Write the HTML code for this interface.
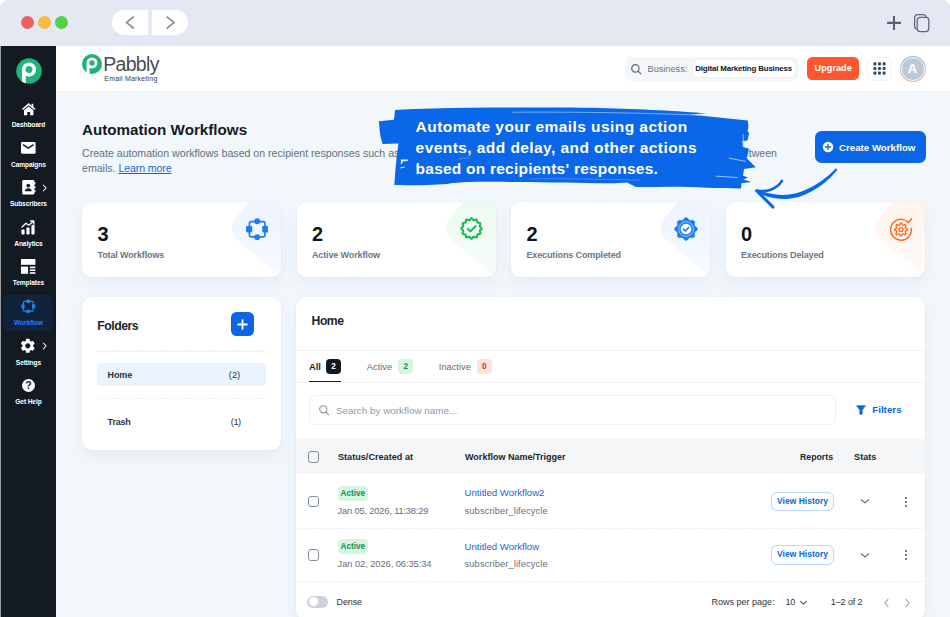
<!DOCTYPE html>
<html lang="en">
<head>
<meta charset="utf-8">
<title>Automation Workflows - Pabbly Email Marketing</title>
<style>
*{box-sizing:border-box;margin:0;padding:0}
html,body{width:950px;height:617px;overflow:hidden;background:#fff}
body{font-family:"Liberation Sans",sans-serif;color:#1c252e;position:relative;-webkit-font-smoothing:antialiased}
.abs{position:absolute}
#win{position:absolute;left:0;top:0;width:950px;height:617px;background:#e5e8f2;border-radius:7.5px 7.5px 0 0;overflow:hidden}
/* chrome */
.dot{position:absolute;top:16.1px;width:13px;height:13px;border-radius:50%}
.navpill{position:absolute;top:10px;height:25px;background:#fff}
/* sidebar */
#side{position:absolute;left:.8px;top:46px;width:55.6px;height:571px;background:#141a22}
#edge{position:absolute;left:0;top:46px;width:.9px;height:571px;background:#9b9ea2}
.sl{position:absolute;left:.7px;width:55.5px;text-align:center;color:#fff;font-weight:700;font-size:6.6px;line-height:8px;letter-spacing:-0.1px;white-space:nowrap}
.si{position:absolute}
/* header */
#hdr{position:absolute;left:56.4px;top:46px;width:893.6px;height:45.5px;background:#fff}
#hdrline{position:absolute;left:56.6px;top:91.2px;width:893.4px;height:1.3px;background:repeating-linear-gradient(90deg,#e4e9ee 0 2px,rgba(255,255,255,0) 2px 3px)}
#main{position:absolute;left:56.4px;top:91.5px;width:893.6px;height:526px;background:#f1f7fb}
.t{position:absolute;white-space:nowrap;line-height:1}
.card{position:absolute;top:201.5px;width:199.3px;height:75.5px;background:#fff;border-radius:9px;box-shadow:0 0 1.5px rgba(145,158,171,.22),0 7.5px 15px -2.5px rgba(145,158,171,.13);overflow:hidden}
.card .num{position:absolute;left:15.5px;top:22px;font-weight:700;font-size:20px;line-height:20px;color:#10151c}
.card .lab{position:absolute;left:15.5px;top:47.5px;font-weight:700;font-size:9px;letter-spacing:-.13px;line-height:12px;color:#6b7785;white-space:nowrap}
.card .dia{position:absolute;right:-64.6px;top:-28px;width:100px;height:100px;border-radius:15px;transform:rotate(40deg)}
.panel{position:absolute;background:#fff;border-radius:10px;box-shadow:0 0 1.5px rgba(145,158,171,.22),0 7.5px 15px -2.5px rgba(145,158,171,.13)}
.dash{position:absolute;height:1.2px;margin-top:-.2px;background:repeating-linear-gradient(90deg,#edf0f3 0 2px,rgba(255,255,255,0) 2px 3px)}

.cb{position:absolute;left:308.1px;width:11.3px;height:11.3px;border:1.4px solid #818d9b;border-radius:2.8px;margin-top:.3px}
.badge{height:15.4px;width:30.6px;border-radius:4px;background:#d8f5e2;color:#118d57;font-weight:700;font-size:8.2px;line-height:15.2px;text-align:center;white-space:nowrap}
.date{font-size:9.3px;line-height:11px;color:#626f7d}
.wname{font-size:9.6px;line-height:11px;color:#1565d8}
.vh{left:771.4px;width:62.3px;height:19.5px;border:1.2px solid #bcd5fa;border-radius:6px;background:#fff;color:#0d66e4;font-weight:700;font-size:8.5px;line-height:17.3px;text-align:center;white-space:nowrap}
</style>
</head>
<body>
<div id="win">
  <!-- browser chrome -->
  <div class="dot" style="left:21px;background:#f25f5c"></div>
  <div class="dot" style="left:38px;background:#f9bb3f"></div>
  <div class="dot" style="left:55px;background:#56cf46"></div>
  <div class="navpill" style="left:112px;width:36.1px;border-radius:12.5px 0 0 12.5px"></div>
  <div class="navpill" style="left:151.9px;width:36.1px;border-radius:0 12.5px 12.5px 0"></div>
  <svg class="abs" style="left:112px;top:10px" width="76" height="25" viewBox="0 0 76 25" fill="none" stroke="#8d8d92" stroke-width="1.7" stroke-linecap="butt" stroke-linejoin="miter">
    <path d="M21.9 6.7 L14.6 12.6 L21.9 18.5"/><path d="M54.7 6.7 L62 12.6 L54.7 18.5"/>
  </svg>
  <svg class="abs" style="left:884px;top:12px" width="50" height="24" viewBox="0 0 50 24" fill="none" stroke="#5f6b7c" stroke-width="1.3" stroke-linecap="round">
    <path d="M3.1 10.9 H17 M10 4 V17.9" stroke-width="2.1" stroke-linecap="butt" stroke="#566274"/>
    <rect x="30.6" y="2.6" width="11.4" height="14.6" rx="3.2"/>
    <rect x="33.2" y="5.4" width="11.6" height="14.2" rx="3" fill="#e5e8f2"/>
  </svg>

  <!-- sidebar -->
  <div id="side"></div>
  <div id="edge"></div>

  <!-- sidebar content -->
  <svg class="abs" style="left:15.7px;top:58px" width="26" height="26" viewBox="0 0 26 26">
    <defs><clipPath id="lc1"><circle cx="13" cy="13" r="12.75"/></clipPath></defs>
    <circle cx="13" cy="13" r="12.75" fill="#20b276"/>
    <g clip-path="url(#lc1)" fill="#fff"><circle cx="13" cy="11.6" r="7.1"/><rect x="5.9" y="11.6" width="3.9" height="15"/></g>
    <circle cx="13" cy="11.6" r="3.5" fill="#20b276"/>
  </svg>
  <!-- dashboard -->
  <svg class="abs" style="left:20.6px;top:101.6px" width="15.4" height="14.5" viewBox="0 0 17 16" fill="#fff">
    <path d="M8.5 1.2 L1 7.6 L2.1 8.9 L8.5 3.5 L14.9 8.9 L16 7.6 L13.6 5.5 V1.8 H11.8 V4 Z"/>
    <path d="M3.3 9.2 L8.5 4.9 L13.7 9.2 V14.6 H10.1 V10.9 H6.9 V14.6 H3.3 Z"/>
  </svg>
  <div class="sl" style="top:121px">Dashboard</div>
  <!-- campaigns -->
  <svg class="abs" style="left:21.3px;top:142.2px" width="14.6" height="11.8" viewBox="0 0 14.6 11.8">
    <rect x="0" y="0" width="14.6" height="11.8" rx="1.4" fill="#fff"/>
    <path d="M2 2.6 L7.3 6.1 L12.6 2.6" fill="none" stroke="#141a22" stroke-width="1.5"/>
  </svg>
  <div class="sl" style="top:161px">Campaigns</div>
  <!-- subscribers -->
  <svg class="abs" style="left:21.8px;top:180.4px" width="14" height="14.6" viewBox="0 0 14 14.6">
    <path d="M1.6 0 H11 A1.4 1.4 0 0 1 12.4 1.4 V2.2 H13.4 V4.2 H12.4 V6.2 H13.4 V8.2 H12.4 V10.2 H13.4 V12.2 H12.4 V13.2 A1.4 1.4 0 0 1 11 14.6 H1.6 A1.4 1.4 0 0 1 .2 13.2 V1.4 A1.4 1.4 0 0 1 1.6 0 Z" fill="#fff"/>
    <circle cx="6.3" cy="5.6" r="1.9" fill="#141a22"/>
    <path d="M2.9 11.2 C2.9 9.2 4.5 8.3 6.3 8.3 C8.1 8.3 9.7 9.2 9.7 11.2 Z" fill="#141a22"/>
  </svg>
  <svg class="abs" style="left:41.6px;top:184.2px" width="5.4" height="8.1" viewBox="0 0 6 9" fill="none" stroke="#dfe3e8" stroke-width="1.2" stroke-linecap="round" stroke-linejoin="round"><path d="M1.5 1.2 L4.6 4.4 L1.5 7.6"/></svg>
  <div class="sl" style="top:200px">Subscribers</div>
  <!-- analytics -->
  <svg class="abs" style="left:21.2px;top:219.5px" width="14.6" height="15" viewBox="0 0 14.6 15">
    <rect x=".4" y="9.6" width="3.2" height="4.8" rx=".9" fill="#fff"/>
    <rect x="5.4" y="7.4" width="3.2" height="7" rx=".9" fill="#fff"/>
    <rect x="10.4" y="5" width="3.2" height="9.4" rx=".9" fill="#fff"/>
    <path d="M1 7 L5 3.2 L7.6 5.2 L12.4 1.4 M9.6 1 H12.8 V4.2" fill="none" stroke="#fff" stroke-width="1.3" stroke-linecap="round" stroke-linejoin="round"/>
  </svg>
  <div class="sl" style="top:240px">Analytics</div>
  <!-- templates -->
  <svg class="abs" style="left:21.2px;top:259.2px" width="14.4" height="15" viewBox="0 0 14.4 15" fill="#fff">
    <rect x="0" y="0" width="14.4" height="5.8"/>
    <rect x="0" y="7.6" width="7" height="7.2"/>
    <rect x="8.8" y="7.6" width="5.6" height="1.6"/>
    <rect x="8.8" y="10.4" width="5.6" height="1.6"/>
    <rect x="8.8" y="13.2" width="5.6" height="1.6"/>
  </svg>
  <div class="sl" style="top:279px">Templates</div>
  <!-- workflow (active) -->
  <div class="abs" style="left:3.4px;top:294.8px;width:50px;height:36px;border-radius:6px;background:#11233a"></div>
  <svg class="abs" style="left:21.2px;top:298.9px" width="14.6" height="14.6" viewBox="0 0 15.6 15.6">
    <rect x="2.6" y="2.6" width="10.4" height="10.4" rx="1" fill="none" stroke="#1a83f5" stroke-width="1.3"/>
    <circle cx="7.8" cy="2.4" r="2.1" fill="#1a83f5"/>
    <circle cx="7.8" cy="13.2" r="2.1" fill="#1a83f5"/>
    <rect x="0.3" y="5.6" width="3.6" height="4.4" rx=".9" fill="#1a83f5"/>
    <rect x="11.7" y="5.6" width="3.6" height="4.4" rx=".9" fill="#1a83f5"/>
  </svg>
  <div class="sl" style="top:319.3px;color:#1a83f5">Workflow</div>
  <!-- settings -->
  <svg class="abs" style="left:19.4px;top:337px" width="17.6" height="17.6" viewBox="0 0 24 24" fill="#fff">
    <path d="M19.14 12.94c.04-.3.06-.61.06-.94 0-.32-.02-.64-.07-.94l2.03-1.58a.49.49 0 0 0 .12-.61l-1.92-3.32a.488.488 0 0 0-.59-.22l-2.39.96c-.5-.38-1.03-.7-1.62-.94l-.36-2.54a.484.484 0 0 0-.48-.41h-3.84c-.24 0-.43.17-.47.41l-.36 2.54c-.59.24-1.13.57-1.62.94l-2.39-.96c-.22-.08-.47 0-.59.22L2.74 8.87c-.12.21-.08.47.12.61l2.03 1.58c-.05.3-.09.63-.09.94s.02.64.07.94l-2.03 1.58a.49.49 0 0 0-.12.61l1.92 3.32c.12.22.37.29.59.22l2.39-.96c.5.38 1.03.7 1.62.94l.36 2.54c.05.24.24.41.48.41h3.84c.24 0 .44-.17.47-.41l.36-2.54c.59-.24 1.13-.56 1.62-.94l2.39.96c.22.08.47 0 .59-.22l1.92-3.32c.12-.22.07-.47-.12-.61l-2.01-1.58zM12 15.6c-1.98 0-3.600-1.620-3.600-3.600s1.620-3.600 3.600-3.600 3.600 1.620 3.600 3.600-1.620 3.600-3.600 3.600z"/>
  </svg>
  <svg class="abs" style="left:41.6px;top:341.8px" width="5.4" height="8.1" viewBox="0 0 6 9" fill="none" stroke="#dfe3e8" stroke-width="1.2" stroke-linecap="round" stroke-linejoin="round"><path d="M1.5 1.2 L4.6 4.4 L1.5 7.6"/></svg>
  <div class="sl" style="top:358.5px">Settings</div>
  <!-- help -->
  <div class="abs" style="left:22px;top:378.7px;width:13px;height:13px;border-radius:50%;background:#fff;color:#141a22;font-weight:700;font-size:10.5px;line-height:13.5px;text-align:center">?</div>
  <div class="sl" style="top:398px">Get Help</div>
  <div id="hdr"></div>
  <div id="main"></div>
  <div id="hdrline"></div>

  <!-- header -->
  <svg class="abs" style="left:81.8px;top:53.8px" width="20" height="20" viewBox="0 0 26 26">
    <defs><clipPath id="lc2"><circle cx="13" cy="13" r="13"/></clipPath></defs>
    <circle cx="13" cy="13" r="13" fill="#20b276"/>
    <g clip-path="url(#lc2)" fill="#fff"><circle cx="13" cy="11.6" r="7.1"/><rect x="5.9" y="11.6" width="3.9" height="15"/></g>
    <circle cx="13" cy="11.6" r="3.5" fill="#20b276"/>
  </svg>
  <div class="t" id="brand" style="left:103.2px;top:52.6px;font-size:19.5px;line-height:22px;color:#4c4c4f;letter-spacing:-0.68px">Pabbly</div>
  <div class="t" id="brandsub" style="left:104.3px;top:73.6px;font-size:7px;line-height:9px;color:#3b3b3d;letter-spacing:.2px">Email Marketing</div>

  <div class="abs" style="left:624.5px;top:57px;width:174.5px;height:23.5px;border-radius:7px;background:#f4f6f8"></div>
  <svg class="abs" style="left:629.5px;top:62.5px" width="12" height="12" viewBox="0 0 12 12" fill="none" stroke="#5f6b7a" stroke-width="1.2" stroke-linecap="round"><circle cx="5.4" cy="5.4" r="3.7"/><path d="M8.2 8.2 L10.8 10.8"/></svg>
  <div class="t" id="biz" style="left:647.5px;top:63.5px;font-size:9.2px;line-height:11px;color:#6b7785;font-weight:400">Business:</div>
  <div class="abs" style="left:692.5px;top:59.8px;width:102px;height:17px;border-radius:5px;background:#fff;box-shadow:0 0 1px rgba(145,158,171,.4)"></div>
  <div class="t" id="bizname" style="left:695.3px;top:63.6px;font-size:7.9px;line-height:10px;color:#10151c;font-weight:700;letter-spacing:-.16px">Digital Marketing Business</div>
  <div class="abs" style="left:807.3px;top:57px;width:51.8px;height:22.8px;border-radius:5.5px;background:#ff5630"></div>
  <div class="t" id="upg" style="left:807.3px;width:51.8px;text-align:center;top:63.2px;font-size:9.2px;line-height:11px;color:#fff;font-weight:700">Upgrade</div>
  <div class="abs" style="left:867px;top:56.5px;width:25px;height:24px;border-radius:5.5px;background:#fff;border:1px solid #f1f3f5"></div>
  <svg class="abs" style="left:872.9px;top:62px" width="13" height="13" viewBox="0 0 13 13" fill="#354761"><rect x="0.35" y="0.35" width="3.1" height="3.1" rx="1.1"/><rect x="4.95" y="0.35" width="3.1" height="3.1" rx="1.1"/><rect x="9.55" y="0.35" width="3.1" height="3.1" rx="1.1"/><rect x="0.35" y="4.95" width="3.1" height="3.1" rx="1.1"/><rect x="4.95" y="4.95" width="3.1" height="3.1" rx="1.1"/><rect x="9.55" y="4.95" width="3.1" height="3.1" rx="1.1"/><rect x="0.35" y="9.55" width="3.1" height="3.1" rx="1.1"/><rect x="4.95" y="9.55" width="3.1" height="3.1" rx="1.1"/><rect x="9.55" y="9.55" width="3.1" height="3.1" rx="1.1"/></svg>
  <div class="abs" style="left:899.5px;top:55.5px;width:26px;height:26px;border-radius:50%;background:linear-gradient(180deg,#8db5ee 0%,#b9c6da 50%,#f3b18d 100%)"></div>
  <div class="abs" id="ava" style="left:900.5px;top:56.5px;width:24px;height:24px;border-radius:50%;background:#bfc9d6;border:1.6px solid #fff;color:#fff;font-weight:700;font-size:13px;line-height:21.4px;text-align:center">A</div>

  <!-- page title -->
  <div class="t" id="title" style="left:82px;top:121.5px;font-size:15.2px;line-height:16px;font-weight:700;color:#141a22">Automation Workflows</div>
  <div class="t" id="desc1" style="left:82px;top:147.1px;font-size:10.6px;line-height:12px;color:#626f7d;width:695px;display:flex;justify-content:space-between"><span id="d1a">Create automation workflows based on recipient responses such as opens, clicks and more, with a smart time delay</span><span>between</span></div>
  <div class="t" id="desc2" style="left:82px;top:162.2px;font-size:10.6px;line-height:12px;color:#626f7d"><span id="d2a">emails.</span> <span id="d2b" style="color:#1565d8;text-decoration:underline;font-weight:400;letter-spacing:-.13px">Learn more</span></div>

  <!-- create workflow -->
  <div class="abs" style="left:814.7px;top:131.3px;width:110.9px;height:31.4px;border-radius:6.5px;background:#0a66e7"></div>
  <svg class="abs" style="left:822px;top:140.6px" width="12" height="12" viewBox="0 0 12 12"><circle cx="6" cy="6" r="5.2" fill="#fff"/><path d="M6 3.4 V8.6 M3.4 6 H8.6" stroke="#0d66e4" stroke-width="1.3" stroke-linecap="round"/></svg>
  <div class="t" id="cw" style="left:839.2px;top:141.8px;font-size:9.8px;line-height:11px;color:#fff;font-weight:700;transform-origin:0 50%;transform:scaleX(.99)">Create Workflow</div>

  <!-- stat cards -->
  <div class="card" style="left:82px">
    <div class="dia" style="background:linear-gradient(140deg,#e7f1fe 0%,#eef5fe 45%,#fafcff 100%)"></div>
    <div class="num">3</div><div class="lab" id="l1">Total Workflows</div>
    <svg class="abs" style="left:164px;top:16.2px" width="22.4" height="22.4" viewBox="0 0 22.4 22.4">
      <rect x="3.4" y="3.6" width="15.6" height="15.2" rx="1.6" fill="none" stroke="#1b7ff5" stroke-width="1.7"/>
      <circle cx="11.2" cy="3.2" r="3" fill="#1b7ff5"/>
      <circle cx="11.2" cy="19.2" r="3" fill="#1b7ff5"/>
      <rect x="0" y="8" width="6.2" height="6.4" rx="1.3" fill="#1b7ff5"/>
      <rect x="16.2" y="8" width="6.2" height="6.4" rx="1.3" fill="#1b7ff5"/>
    </svg>
  </div>
  <div class="card" style="left:296.5px">
    <div class="dia" style="background:linear-gradient(140deg,#e6f8ec 0%,#eefaf2 45%,#fafefb 100%)"></div>
    <div class="num">2</div><div class="lab" id="l2">Active Workflow</div>
    <svg class="abs" style="left:163.8px;top:15.9px" width="23" height="23" viewBox="0 0 24 24" fill="none" stroke="#16b650" stroke-linecap="round" stroke-linejoin="round">
      <path d="M12.00 1.40 L12.41 1.50 L12.80 1.78 L13.16 2.19 L13.48 2.63 L13.78 3.03 L14.09 3.31 L14.42 3.42 L14.80 3.38 L15.24 3.21 L15.73 2.99 L16.24 2.80 L16.74 2.70 L17.17 2.76 L17.52 3.00 L17.75 3.39 L17.89 3.90 L17.95 4.45 L18.01 4.97 L18.10 5.40 L18.29 5.71 L18.60 5.90 L19.03 5.99 L19.55 6.05 L20.10 6.11 L20.61 6.25 L21.00 6.48 L21.24 6.83 L21.30 7.26 L21.20 7.76 L21.01 8.27 L20.79 8.76 L20.62 9.20 L20.58 9.58 L20.69 9.91 L20.97 10.22 L21.37 10.52 L21.81 10.84 L22.22 11.20 L22.50 11.59 L22.60 12.00 L22.50 12.41 L22.22 12.80 L21.81 13.16 L21.37 13.48 L20.97 13.78 L20.69 14.09 L20.58 14.42 L20.62 14.80 L20.79 15.24 L21.01 15.73 L21.20 16.24 L21.30 16.74 L21.24 17.17 L21.00 17.52 L20.61 17.75 L20.10 17.89 L19.55 17.95 L19.03 18.01 L18.60 18.10 L18.29 18.29 L18.10 18.60 L18.01 19.03 L17.95 19.55 L17.89 20.10 L17.75 20.61 L17.52 21.00 L17.17 21.24 L16.74 21.30 L16.24 21.20 L15.73 21.01 L15.24 20.79 L14.80 20.62 L14.42 20.58 L14.09 20.69 L13.78 20.97 L13.48 21.37 L13.16 21.81 L12.80 22.22 L12.41 22.50 L12.00 22.60 L11.59 22.50 L11.20 22.22 L10.84 21.81 L10.52 21.37 L10.22 20.97 L9.91 20.69 L9.58 20.58 L9.20 20.62 L8.76 20.79 L8.27 21.01 L7.76 21.20 L7.26 21.30 L6.83 21.24 L6.48 21.00 L6.25 20.61 L6.11 20.10 L6.05 19.55 L5.99 19.03 L5.90 18.60 L5.71 18.29 L5.40 18.10 L4.97 18.01 L4.45 17.95 L3.90 17.89 L3.39 17.75 L3.00 17.52 L2.76 17.17 L2.70 16.74 L2.80 16.24 L2.99 15.73 L3.21 15.24 L3.38 14.80 L3.42 14.42 L3.31 14.09 L3.03 13.78 L2.63 13.48 L2.19 13.16 L1.78 12.80 L1.50 12.41 L1.40 12.00 L1.50 11.59 L1.78 11.20 L2.19 10.84 L2.63 10.52 L3.03 10.22 L3.31 9.91 L3.42 9.58 L3.38 9.20 L3.21 8.76 L2.99 8.27 L2.80 7.76 L2.70 7.26 L2.76 6.83 L3.00 6.48 L3.39 6.25 L3.90 6.11 L4.45 6.05 L4.97 5.99 L5.40 5.90 L5.71 5.71 L5.90 5.40 L5.99 4.97 L6.05 4.45 L6.11 3.90 L6.25 3.39 L6.48 3.00 L6.83 2.76 L7.26 2.70 L7.76 2.80 L8.27 2.99 L8.76 3.21 L9.20 3.38 L9.58 3.42 L9.91 3.31 L10.22 3.03 L10.52 2.63 L10.84 2.19 L11.20 1.78 L11.59 1.50 Z" stroke-width="2.1"/>
      <path d="M8.2 12.5 L10.9 15 L16.2 9.6" stroke-width="2.1"/>
    </svg>
  </div>
  <div class="card" style="left:511px">
    <div class="dia" style="background:linear-gradient(140deg,#e7f1fe 0%,#eef5fe 45%,#fafcff 100%)"></div>
    <div class="num">2</div><div class="lab" id="l3">Executions Completed</div>
    <svg class="abs" style="left:163px;top:15.3px" width="24" height="24" viewBox="0 0 24 24">
      <path d="M12.00 0.70 L12.44 0.73 L12.88 0.84 L13.30 1.02 L13.70 1.29 L14.02 1.85 L14.30 2.42 L14.62 2.72 L14.94 2.96 L15.26 3.16 L15.60 3.32 L15.95 3.44 L16.31 3.53 L16.71 3.59 L17.15 3.60 L17.75 3.39 L18.38 3.22 L18.85 3.31 L19.27 3.49 L19.65 3.72 L19.99 4.01 L20.28 4.35 L20.51 4.73 L20.69 5.15 L20.78 5.62 L20.61 6.25 L20.40 6.85 L20.41 7.29 L20.47 7.69 L20.56 8.05 L20.68 8.40 L20.84 8.74 L21.04 9.06 L21.28 9.38 L21.58 9.70 L22.15 9.98 L22.71 10.30 L22.98 10.70 L23.16 11.12 L23.27 11.56 L23.30 12.00 L23.27 12.44 L23.16 12.88 L22.98 13.30 L22.71 13.70 L22.15 14.02 L21.58 14.30 L21.28 14.62 L21.04 14.94 L20.84 15.26 L20.68 15.60 L20.56 15.95 L20.47 16.31 L20.41 16.71 L20.40 17.15 L20.61 17.75 L20.78 18.38 L20.69 18.85 L20.51 19.27 L20.28 19.65 L19.99 19.99 L19.65 20.28 L19.27 20.51 L18.85 20.69 L18.38 20.78 L17.75 20.61 L17.15 20.40 L16.71 20.41 L16.31 20.47 L15.95 20.56 L15.60 20.68 L15.26 20.84 L14.94 21.04 L14.62 21.28 L14.30 21.58 L14.02 22.15 L13.70 22.71 L13.30 22.98 L12.88 23.16 L12.44 23.27 L12.00 23.30 L11.56 23.27 L11.12 23.16 L10.70 22.98 L10.30 22.71 L9.98 22.15 L9.70 21.58 L9.38 21.28 L9.06 21.04 L8.74 20.84 L8.40 20.68 L8.05 20.56 L7.69 20.47 L7.29 20.41 L6.85 20.40 L6.25 20.61 L5.62 20.78 L5.15 20.69 L4.73 20.51 L4.35 20.28 L4.01 19.99 L3.72 19.65 L3.49 19.27 L3.31 18.85 L3.22 18.38 L3.39 17.75 L3.60 17.15 L3.59 16.71 L3.53 16.31 L3.44 15.95 L3.32 15.60 L3.16 15.26 L2.96 14.94 L2.72 14.62 L2.42 14.30 L1.85 14.02 L1.29 13.70 L1.02 13.30 L0.84 12.88 L0.73 12.44 L0.70 12.00 L0.73 11.56 L0.84 11.12 L1.02 10.70 L1.29 10.30 L1.85 9.98 L2.42 9.70 L2.72 9.38 L2.96 9.06 L3.16 8.74 L3.32 8.40 L3.44 8.05 L3.53 7.69 L3.59 7.29 L3.60 6.85 L3.39 6.25 L3.22 5.62 L3.31 5.15 L3.49 4.73 L3.72 4.35 L4.01 4.01 L4.35 3.72 L4.73 3.49 L5.15 3.31 L5.62 3.22 L6.25 3.39 L6.85 3.60 L7.29 3.59 L7.69 3.53 L8.05 3.44 L8.40 3.32 L8.74 3.16 L9.06 2.96 L9.38 2.72 L9.70 2.42 L9.98 1.85 L10.30 1.29 L10.70 1.02 L11.12 0.84 L11.56 0.73 Z" fill="#1b7ff5" stroke="#1b7ff5" stroke-width=".6" stroke-linejoin="round"/>
      <circle cx="12" cy="12" r="7.3" fill="none" stroke="#cfe3ff" stroke-width=".7"/>
      <circle cx="12" cy="12" r="5.3" fill="#fff"/>
      <path d="M9.5 12.2 L11.4 14 L14.7 10.5" fill="none" stroke="#1b7ff5" stroke-width="1.7" stroke-linecap="round" stroke-linejoin="round"/>
    </svg>
  </div>
  <div class="card" style="left:725.5px">
    <div class="dia" style="background:linear-gradient(140deg,#fff0e8 0%,#fff5ef 45%,#fffcfa 100%)"></div>
    <div class="num">0</div><div class="lab" id="l4">Executions Delayed</div>
    <svg class="abs" style="left:163.2px;top:15.2px" width="24" height="24" viewBox="0 0 24 24" fill="none" stroke="#fa6a1e" stroke-linecap="round" stroke-linejoin="round">
      <path d="M22.3 11.2 A10.4 10.4 0 1 1 15.8 3.1" stroke-width="1.5"/>
      <path d="M17.4 3.9 L19.2 5.7 L22.6 1.9" stroke-width="1.5"/>
      <path d="M12.00 6.05 L12.26 6.08 L12.51 6.17 L12.74 6.32 L12.96 6.55 L13.09 7.11 L13.18 7.67 L13.32 7.91 L13.47 8.09 L13.62 8.22 L13.78 8.30 L13.96 8.36 L14.15 8.37 L14.38 8.35 L14.65 8.28 L15.11 7.94 L15.60 7.64 L15.92 7.63 L16.19 7.69 L16.43 7.81 L16.63 7.97 L16.79 8.17 L16.91 8.41 L16.97 8.68 L16.96 9.00 L16.66 9.49 L16.32 9.95 L16.25 10.22 L16.23 10.45 L16.24 10.64 L16.30 10.82 L16.38 10.98 L16.51 11.13 L16.69 11.28 L16.93 11.42 L17.49 11.51 L18.05 11.64 L18.28 11.86 L18.43 12.09 L18.52 12.34 L18.55 12.60 L18.52 12.86 L18.43 13.11 L18.28 13.34 L18.05 13.56 L17.49 13.69 L16.93 13.78 L16.69 13.92 L16.51 14.07 L16.38 14.22 L16.30 14.38 L16.24 14.56 L16.23 14.75 L16.25 14.98 L16.32 15.25 L16.66 15.71 L16.96 16.20 L16.97 16.52 L16.91 16.79 L16.79 17.03 L16.63 17.23 L16.43 17.39 L16.19 17.51 L15.92 17.57 L15.60 17.56 L15.11 17.26 L14.65 16.92 L14.38 16.85 L14.15 16.83 L13.96 16.84 L13.78 16.90 L13.62 16.98 L13.47 17.11 L13.32 17.29 L13.18 17.53 L13.09 18.09 L12.96 18.65 L12.74 18.88 L12.51 19.03 L12.26 19.12 L12.00 19.15 L11.74 19.12 L11.49 19.03 L11.26 18.88 L11.04 18.65 L10.91 18.09 L10.82 17.53 L10.68 17.29 L10.53 17.11 L10.38 16.98 L10.22 16.90 L10.04 16.84 L9.85 16.83 L9.62 16.85 L9.35 16.92 L8.89 17.26 L8.40 17.56 L8.08 17.57 L7.81 17.51 L7.57 17.39 L7.37 17.23 L7.21 17.03 L7.09 16.79 L7.03 16.52 L7.04 16.20 L7.34 15.71 L7.68 15.25 L7.75 14.98 L7.77 14.75 L7.76 14.56 L7.70 14.38 L7.62 14.22 L7.49 14.07 L7.31 13.92 L7.07 13.78 L6.51 13.69 L5.95 13.56 L5.72 13.34 L5.57 13.11 L5.48 12.86 L5.45 12.60 L5.48 12.34 L5.57 12.09 L5.72 11.86 L5.95 11.64 L6.51 11.51 L7.07 11.42 L7.31 11.28 L7.49 11.13 L7.62 10.98 L7.70 10.82 L7.76 10.64 L7.77 10.45 L7.75 10.22 L7.68 9.95 L7.34 9.49 L7.04 9.00 L7.03 8.68 L7.09 8.41 L7.21 8.17 L7.37 7.97 L7.57 7.81 L7.81 7.69 L8.08 7.63 L8.40 7.64 L8.89 7.94 L9.35 8.28 L9.62 8.35 L9.85 8.37 L10.04 8.36 L10.22 8.30 L10.38 8.22 L10.53 8.09 L10.68 7.91 L10.82 7.67 L10.91 7.11 L11.04 6.55 L11.26 6.32 L11.49 6.17 L11.74 6.08 Z" stroke-width="1.35"/>
      <circle cx="12" cy="12.6" r="2" stroke-width="1.3"/>
    </svg>
  </div>

  <!-- folders -->
  <div class="panel" style="left:82px;top:297.4px;width:199px;height:152.3px"></div>
  <div class="t" id="fold" style="left:97.3px;top:318.6px;font-size:12.3px;letter-spacing:-.52px;line-height:14px;font-weight:700;color:#1c252e">Folders</div>
  <div class="abs" style="left:231px;top:312.4px;width:23.4px;height:23.2px;border-radius:5.5px;background:#0d66e4"></div>
  <svg class="abs" style="left:237.3px;top:318.6px" width="11" height="11" viewBox="0 0 11 11"><path d="M5.5 1.1 V9.9 M1.1 5.5 H9.9" stroke="#fff" stroke-width="1.8" stroke-linecap="round"/></svg>
  <div class="dash" style="left:97px;top:350.6px;width:169px"></div>
  <div class="abs" style="left:97px;top:363px;width:169px;height:23.4px;border-radius:3px;background:#eaf4ff"></div>
  <div class="t" id="fh" style="left:107.6px;top:369.6px;font-size:9px;letter-spacing:-.15px;line-height:11px;font-weight:700;color:#2a3440">Home</div>
  <div class="t" id="fh2" style="left:228.8px;top:369.6px;font-size:9.3px;line-height:11px;color:#2a3440">(2)</div>
  <div class="dash" style="left:97px;top:398px;width:169px"></div>
  <div class="t" id="ft" style="left:107.6px;top:416.7px;font-size:9px;letter-spacing:-.2px;line-height:11px;font-weight:700;color:#2a3440">Trash</div>
  <div class="t" id="ft2" style="left:230.8px;top:416.7px;font-size:9.3px;letter-spacing:-.5px;line-height:11px;color:#2a3440">(1)</div>

  <!-- table panel -->
  <div class="panel" style="left:296.1px;top:297.4px;width:628.7px;height:322.4px"></div>
  <div class="t" id="th" style="left:311.6px;top:314px;font-size:12.2px;letter-spacing:-.5px;line-height:14px;font-weight:700;color:#1c252e">Home</div>
  <div class="abs" style="left:296.2px;top:350.4px;width:628.8px;height:1px;background:#f1f3f6"></div>
  <div class="t" id="ta" style="left:309px;top:361.6px;font-size:9.3px;line-height:11px;font-weight:700;color:#1c252e">All</div>
  <div class="abs tb" style="left:326px;top:359.3px;width:15.2px;height:15.2px;border-radius:4px;background:#141a22;color:#fff;font-weight:700;font-size:8.2px;line-height:15.4px;text-align:center">2</div>
  <div class="abs" style="left:309px;top:380.6px;width:32.2px;height:1.7px;background:#1c252e"></div>
  <div class="t" id="tac" style="left:366.8px;top:361.6px;font-size:9.3px;line-height:11px;font-weight:400;color:#5f6b79">Active</div>
  <div class="abs tb" style="left:398.3px;top:359.3px;width:15.2px;height:15.2px;border-radius:4px;background:#d8f5e2;color:#118d57;font-weight:700;font-size:8.2px;line-height:15.4px;text-align:center">2</div>
  <div class="t" id="tin" style="left:438.8px;top:361.6px;font-size:9.3px;line-height:11px;font-weight:400;color:#5f6b79">Inactive</div>
  <div class="abs tb" style="left:476.6px;top:359.3px;width:15.2px;height:15.2px;border-radius:4px;background:#ffe3d8;color:#b3411a;font-weight:700;font-size:8.2px;line-height:15.4px;text-align:center">0</div>
  <div class="abs" style="left:296.2px;top:382.3px;width:628.8px;height:1px;background:#f1f3f6"></div>

  <div class="abs" style="left:309px;top:395.4px;width:527px;height:29.6px;border-radius:6px;border:1px solid #eef1f4;background:#fff"></div>
  <svg class="abs" style="left:318.2px;top:404.2px" width="12" height="12" viewBox="0 0 12 12" fill="none" stroke="#8a96a3" stroke-width="1.1" stroke-linecap="round"><circle cx="5.3" cy="5.3" r="3.6"/><path d="M8 8 L10.6 10.6"/></svg>
  <div class="t" id="sp" style="left:336px;top:405px;font-size:9.9px;line-height:11px;color:#909ba8">Search by workflow name...</div>
  <svg class="abs" style="left:855.5px;top:405px" width="10" height="10" viewBox="0 0 10 10"><path d="M.6 .8 H9.4 L6.1 5 V9.2 H3.9 V5 Z" fill="#0d66e4" stroke="#0d66e4" stroke-width=".8" stroke-linejoin="round"/></svg>
  <div class="t" id="fl" style="left:872.2px;top:404px;font-size:9.8px;line-height:11px;color:#0d66e4;font-weight:700">Filters</div>

  <div class="abs" style="left:296.2px;top:439px;width:628.8px;height:34.7px;background:#f4f6f8"></div>
  <div class="cb" style="top:451.2px"></div>
  <div class="t" id="h1" style="left:337.6px;top:451.4px;font-size:9.5px;line-height:11px;font-weight:700;color:#1c252e;transform-origin:0 50%;transform:scaleX(0.96)">Status/Created at</div>
  <div class="t" id="h2" style="left:464.6px;top:451.4px;font-size:9.5px;line-height:11px;font-weight:700;color:#1c252e;transform-origin:0 50%;transform:scaleX(0.95)">Workflow Name/Trigger</div>
  <div class="t" id="h3" style="left:800.2px;top:451.4px;font-size:9.5px;line-height:11px;font-weight:700;color:#1c252e;transform-origin:0 50%;transform:scaleX(0.92)">Reports</div>
  <div class="t" id="h4" style="left:854.4px;top:451.4px;font-size:9.5px;line-height:11px;font-weight:700;color:#1c252e;transform-origin:0 50%;transform:scaleX(0.967)">Stats</div>

  <!-- row 1 -->
  <div class="cb" style="top:495.8px"></div>
  <div class="abs badge" style="left:337.6px;top:485.5px">Active</div>
  <div class="t date" id="dt1" style="letter-spacing:-.17px;left:337.6px;top:506px">Jan 05, 2026, 11:38:29</div>
  <div class="t wname" id="w1" style="left:464.6px;top:486.8px">Untitled Workflow2</div>
  <div class="t date" id="tr1" style="letter-spacing:.1px;left:464.6px;top:506px">subscriber_lifecycle</div>
  <div class="abs vh" style="top:491.5px">View History</div>
  <svg class="abs" style="left:860.2px;top:498.3px" width="10" height="7" viewBox="0 0 10 7" fill="none" stroke="#56616d" stroke-width="1.2" stroke-linecap="round" stroke-linejoin="round"><path d="M1.4 1.9 L5 4.9 L8.6 1.9"/></svg>
  <svg class="abs" style="left:904px;top:495.6px" width="4" height="12" viewBox="0 0 4 12" fill="#4a5562"><circle cx="2" cy="1.9" r="1"/><circle cx="2" cy="6" r="1"/><circle cx="2" cy="10.1" r="1"/></svg>
  <div class="dash" style="left:296.5px;top:528px;width:628.5px"></div>
  <!-- row 2 -->
  <div class="cb" style="top:549.2px"></div>
  <div class="abs badge" style="left:337.6px;top:538.6px">Active</div>
  <div class="t date" id="dt2" style="letter-spacing:-.06px;left:337.6px;top:559.2px">Jan 02, 2026, 06:35:34</div>
  <div class="t wname" id="w2" style="left:464.6px;top:540.6px">Untitled Workflow</div>
  <div class="t date" id="tr2" style="letter-spacing:.1px;left:464.6px;top:559.2px">subscriber_lifecycle</div>
  <div class="abs vh" style="top:545px">View History</div>
  <svg class="abs" style="left:860.2px;top:551.7px" width="10" height="7" viewBox="0 0 10 7" fill="none" stroke="#56616d" stroke-width="1.2" stroke-linecap="round" stroke-linejoin="round"><path d="M1.4 1.9 L5 4.9 L8.6 1.9"/></svg>
  <svg class="abs" style="left:904px;top:549px" width="4" height="12" viewBox="0 0 4 12" fill="#4a5562"><circle cx="2" cy="1.9" r="1"/><circle cx="2" cy="6" r="1"/><circle cx="2" cy="10.1" r="1"/></svg>
  <div class="dash" style="left:296.5px;top:581.2px;width:628.5px"></div>

  <!-- footer -->
  <div class="abs" style="left:307.2px;top:595.6px;width:21.2px;height:12.4px;border-radius:6.2px;background:#cdd3db"></div>
  <div class="abs" style="left:308.6px;top:597.1px;width:9.4px;height:9.4px;border-radius:50%;background:#fff"></div>
  <div class="t" id="dn" style="left:336.5px;top:597px;font-size:9px;letter-spacing:-.12px;line-height:11px;color:#2a3440">Dense</div>
  <div class="t" id="rp" style="left:711.6px;top:597px;font-size:9px;line-height:11px;color:#2a3440">Rows per page:</div>
  <div class="t" id="r10" style="left:785.6px;top:597px;font-size:9px;letter-spacing:-.4px;line-height:11px;color:#2a3440">10</div>
  <svg class="abs" style="left:799px;top:599.6px" width="9" height="6" viewBox="0 0 9 6" fill="none" stroke="#4a5562" stroke-width="1.1" stroke-linecap="round" stroke-linejoin="round"><path d="M1.6 1.4 L4.5 4.2 L7.4 1.4"/></svg>
  <div class="t" id="r12" style="left:830.8px;top:597px;font-size:9px;letter-spacing:-.1px;line-height:11px;color:#2a3440">1–2 of 2</div>
  <svg class="abs" style="left:883px;top:597.6px" width="7" height="10" viewBox="0 0 7 10" fill="none" stroke="#9aa4ae" stroke-width="1.1" stroke-linecap="round" stroke-linejoin="round"><path d="M5 1.4 L1.8 5 L5 8.6"/></svg>
  <svg class="abs" style="left:904.4px;top:597.6px" width="7" height="10" viewBox="0 0 7 10" fill="none" stroke="#9aa4ae" stroke-width="1.1" stroke-linecap="round" stroke-linejoin="round"><path d="M2 1.4 L5.2 5 L2 8.6"/></svg>
  <!-- banner -->
  <svg class="abs" style="left:370px;top:100px" width="480" height="115" viewBox="370 100 480 115">
    <path fill="#0b67e9" d="M395.1 110 C420 108.6 445 108 470 107.8 C520 107.4 570 107.4 600 107.9 C640 108.8 680 111.2 706.4 113.2 L690 114.4 L747.8 120.5 L748.4 126.6 L747.5 131.5 L749.2 133 L747.3 140.4 L742.3 141.2 L743 147 L749 148.8 L746.5 158 L755.8 167.3 L744 169 L743 175.8 L748 177.4 L743.4 179.6 L751.5 182 L741.4 183.3 L741 188.4 C720 188.2 695 187 672.4 186.7 C660 186.6 648 187.2 636 187 L627 182.6 C615 183.4 612 183.4 600 183.2 C550 182.4 500 181.6 470 181.9 C460 182 452 183 450 183.4 C440 184.8 420 185.4 394.3 185.1 L395.4 170 L396.7 156.7 L398.4 143.4 L382.6 144.1 L380.6 137 L379.7 130.8 L378.9 121.2 L394 119.8 Z"/>
    <path d="M400.8 159.6 L408 159.4 L407.8 161 L402.6 161.4 L402 164 L401 164.2 Z M400.4 167.2 L404.8 166.6 L404.6 167.4 L400.6 168.4 Z" fill="#e6effc"/>
    <path d="M512 112.2 C550 112 580 112.2 610 112.7 C640 113.2 670 114 702 115.2" stroke="#a9c8f6" stroke-width=".7" fill="none"/>
    <path d="M729.2 158.2 L745.4 161.3 M716.2 176.2 L737.3 177.5 M743 134.5 L743.6 146.5" stroke="#c3d9f9" stroke-width=".8" fill="none" stroke-linecap="round"/><path d="M530 178.9 C560 178.5 600 179 640 180.2 M459 158.6 L469 158" stroke="#5b96ec" stroke-width=".7" fill="none" stroke-linecap="round"/>
    <path d="M835.6 168.8 C825 180 806 193.4 787 194.8 C778 195.4 770 194 758 190.4 L757 192.8 C768 197.6 778 199.3 787 198.9 C808 197.6 827 182.6 837 170.2 C837.6 169.2 836.4 168 835.6 168.8 Z" fill="#0b67e9"/>
    <path d="M756.8 190.6 C766 192.4 776.5 189.6 781.9 180.9" fill="none" stroke="#0b67e9" stroke-width="2.6" stroke-linecap="round"/>
    <path d="M756.6 190.8 L773.1 207.1" fill="none" stroke="#0b67e9" stroke-width="2.9" stroke-linecap="round"/>
  </svg>
  <div class="t" id="b1" style="left:415.6px;top:118.2px;font-size:15.5px;letter-spacing:.44px;line-height:18px;color:#fff;font-weight:700">Automate your emails using action</div>
  <div class="t" id="b2" style="left:415.6px;top:139.1px;font-size:15.5px;letter-spacing:.433px;line-height:18px;color:#fff;font-weight:700">events, add delay, and other actions</div>
  <div class="t" id="b3" style="left:415.6px;top:160px;font-size:15.5px;letter-spacing:.226px;line-height:18px;color:#fff;font-weight:700">based on recipients' responses.</div>
</div>
</body>
</html>
